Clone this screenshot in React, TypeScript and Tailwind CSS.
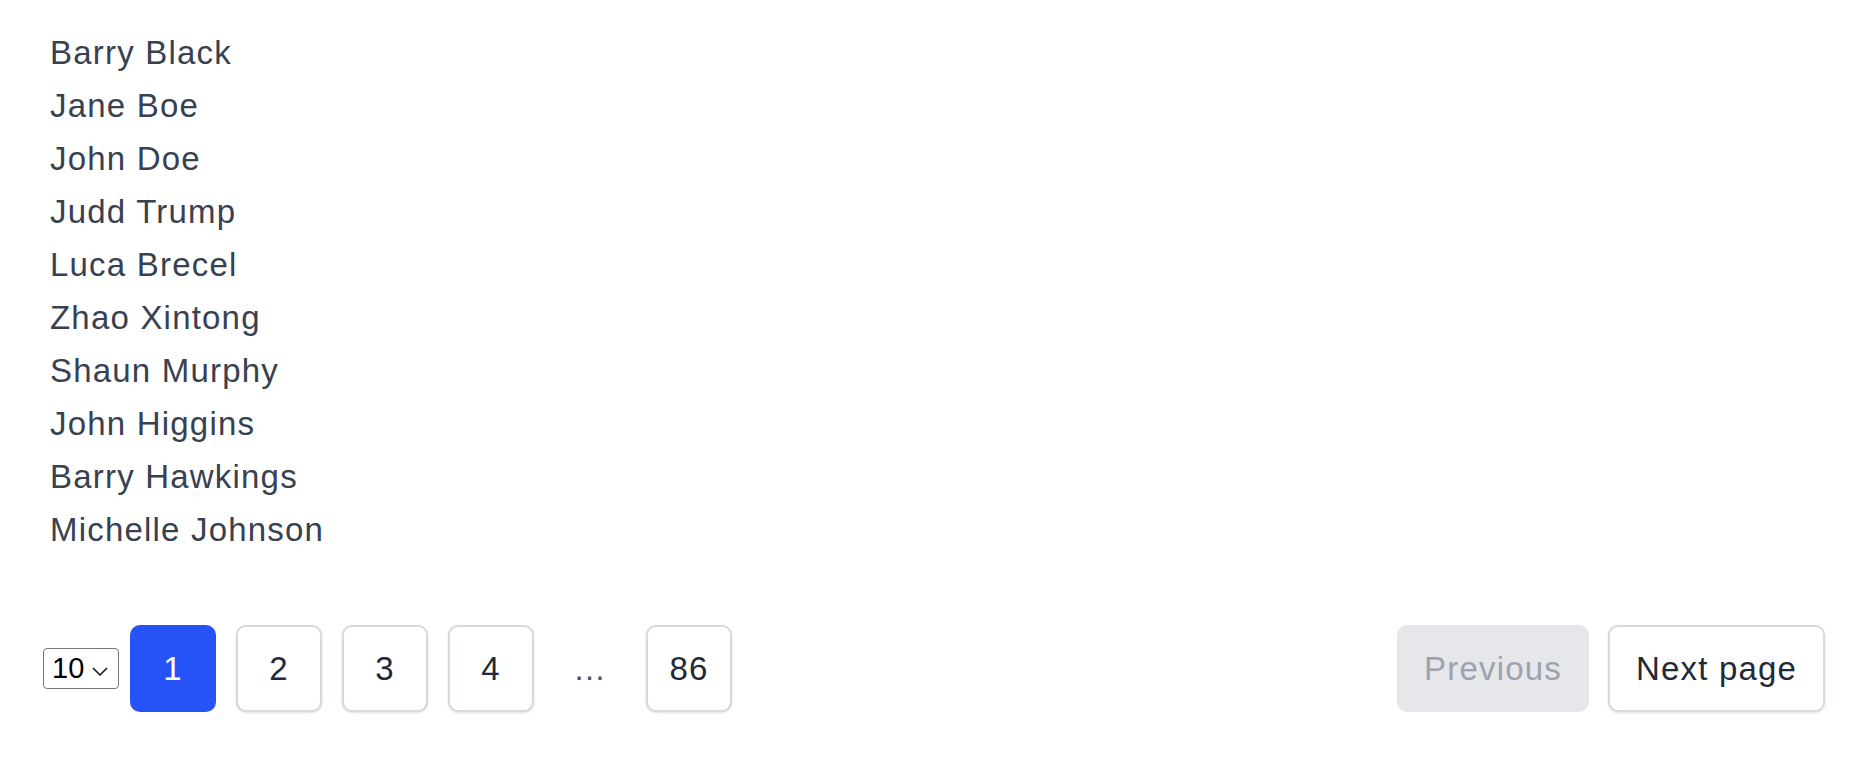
import { useState } from 'react';

const players = [
  'Barry Black',
  'Jane Boe',
  'John Doe',
  'Judd Trump',
  'Luca Brecel',
  'Zhao Xintong',
  'Shaun Murphy',
  'John Higgins',
  'Barry Hawkings',
  'Michelle Johnson',
];

const pages: (number | null)[] = [1, 2, 3, 4, null, 86];

export default function App() {
  const [page, setPage] = useState(1);
  const [perPage, setPerPage] = useState('10');

  return (
    <div className="min-h-screen bg-white pl-[43px] pr-[45px] pt-[26px] font-['Liberation_Sans',Arial,sans-serif]">
      <ul className="pl-[7px] text-[33px] leading-[53px] tracking-[1.2px] text-[#374151]">
        {players.map((name) => (
          <li key={name}>{name}</li>
        ))}
      </ul>

      <div className="mt-[69px] flex items-center justify-between">
        <div className="flex items-center">
          <div className="relative">
            <select
              value={perPage}
              onChange={(e) => setPerPage(e.target.value)}
              className="h-[41px] w-[76px] appearance-none rounded-[4px] border-[1.5px] border-[#767676] bg-white pl-[8px] text-[29px] leading-none tracking-normal text-black"
            >
              <option value="10">10</option>
              <option value="20">20</option>
              <option value="50">50</option>
            </select>
            <svg
              className="pointer-events-none absolute left-[49px] top-[19px] h-[9px] w-[16px]"
              viewBox="0 0 16 9"
              fill="none"
              stroke="#111"
              strokeWidth="1.5"
            >
              <path d="M1 1l7 7 7-7" />
            </svg>
          </div>

          <div className="ml-[11px] flex items-center gap-[20px]">
            {pages.map((p, i) =>
              p === null ? (
                <span
                  key={`gap-${i}`}
                  className="w-[72px] text-center text-[33px] tracking-[1.2px] text-[#4b5563]"
                >
                  …
                </span>
              ) : (
                <button
                  key={p}
                  onClick={() => setPage(p)}
                  className={
                    p === page
                      ? 'flex h-[87px] w-[86px] items-center justify-center rounded-[10px] bg-[#2553f6] text-[33px] tracking-[1.2px] text-white'
                      : 'flex h-[87px] w-[86px] items-center justify-center rounded-[10px] border-2 border-[#d5d9e0] bg-white text-[33px] tracking-[1.2px] text-[#1f2937] shadow-sm'
                  }
                >
                  {p}
                </button>
              )
            )}
          </div>
        </div>

        <div className="flex items-center gap-[19px]">
          <button
            disabled
            className="flex h-[87px] w-[192px] items-center justify-center rounded-[10px] bg-[#e5e7eb] text-[33px] tracking-[1.2px] text-[#9ca3af]"
          >
            Previous
          </button>
          <button
            onClick={() => setPage(page + 1)}
            className="flex h-[87px] w-[217px] items-center justify-center rounded-[10px] border-2 border-[#d5d9e0] bg-white text-[33px] tracking-[1.2px] text-[#1f2937] shadow-sm"
          >
            Next page
          </button>
        </div>
      </div>
    </div>
  );
}
